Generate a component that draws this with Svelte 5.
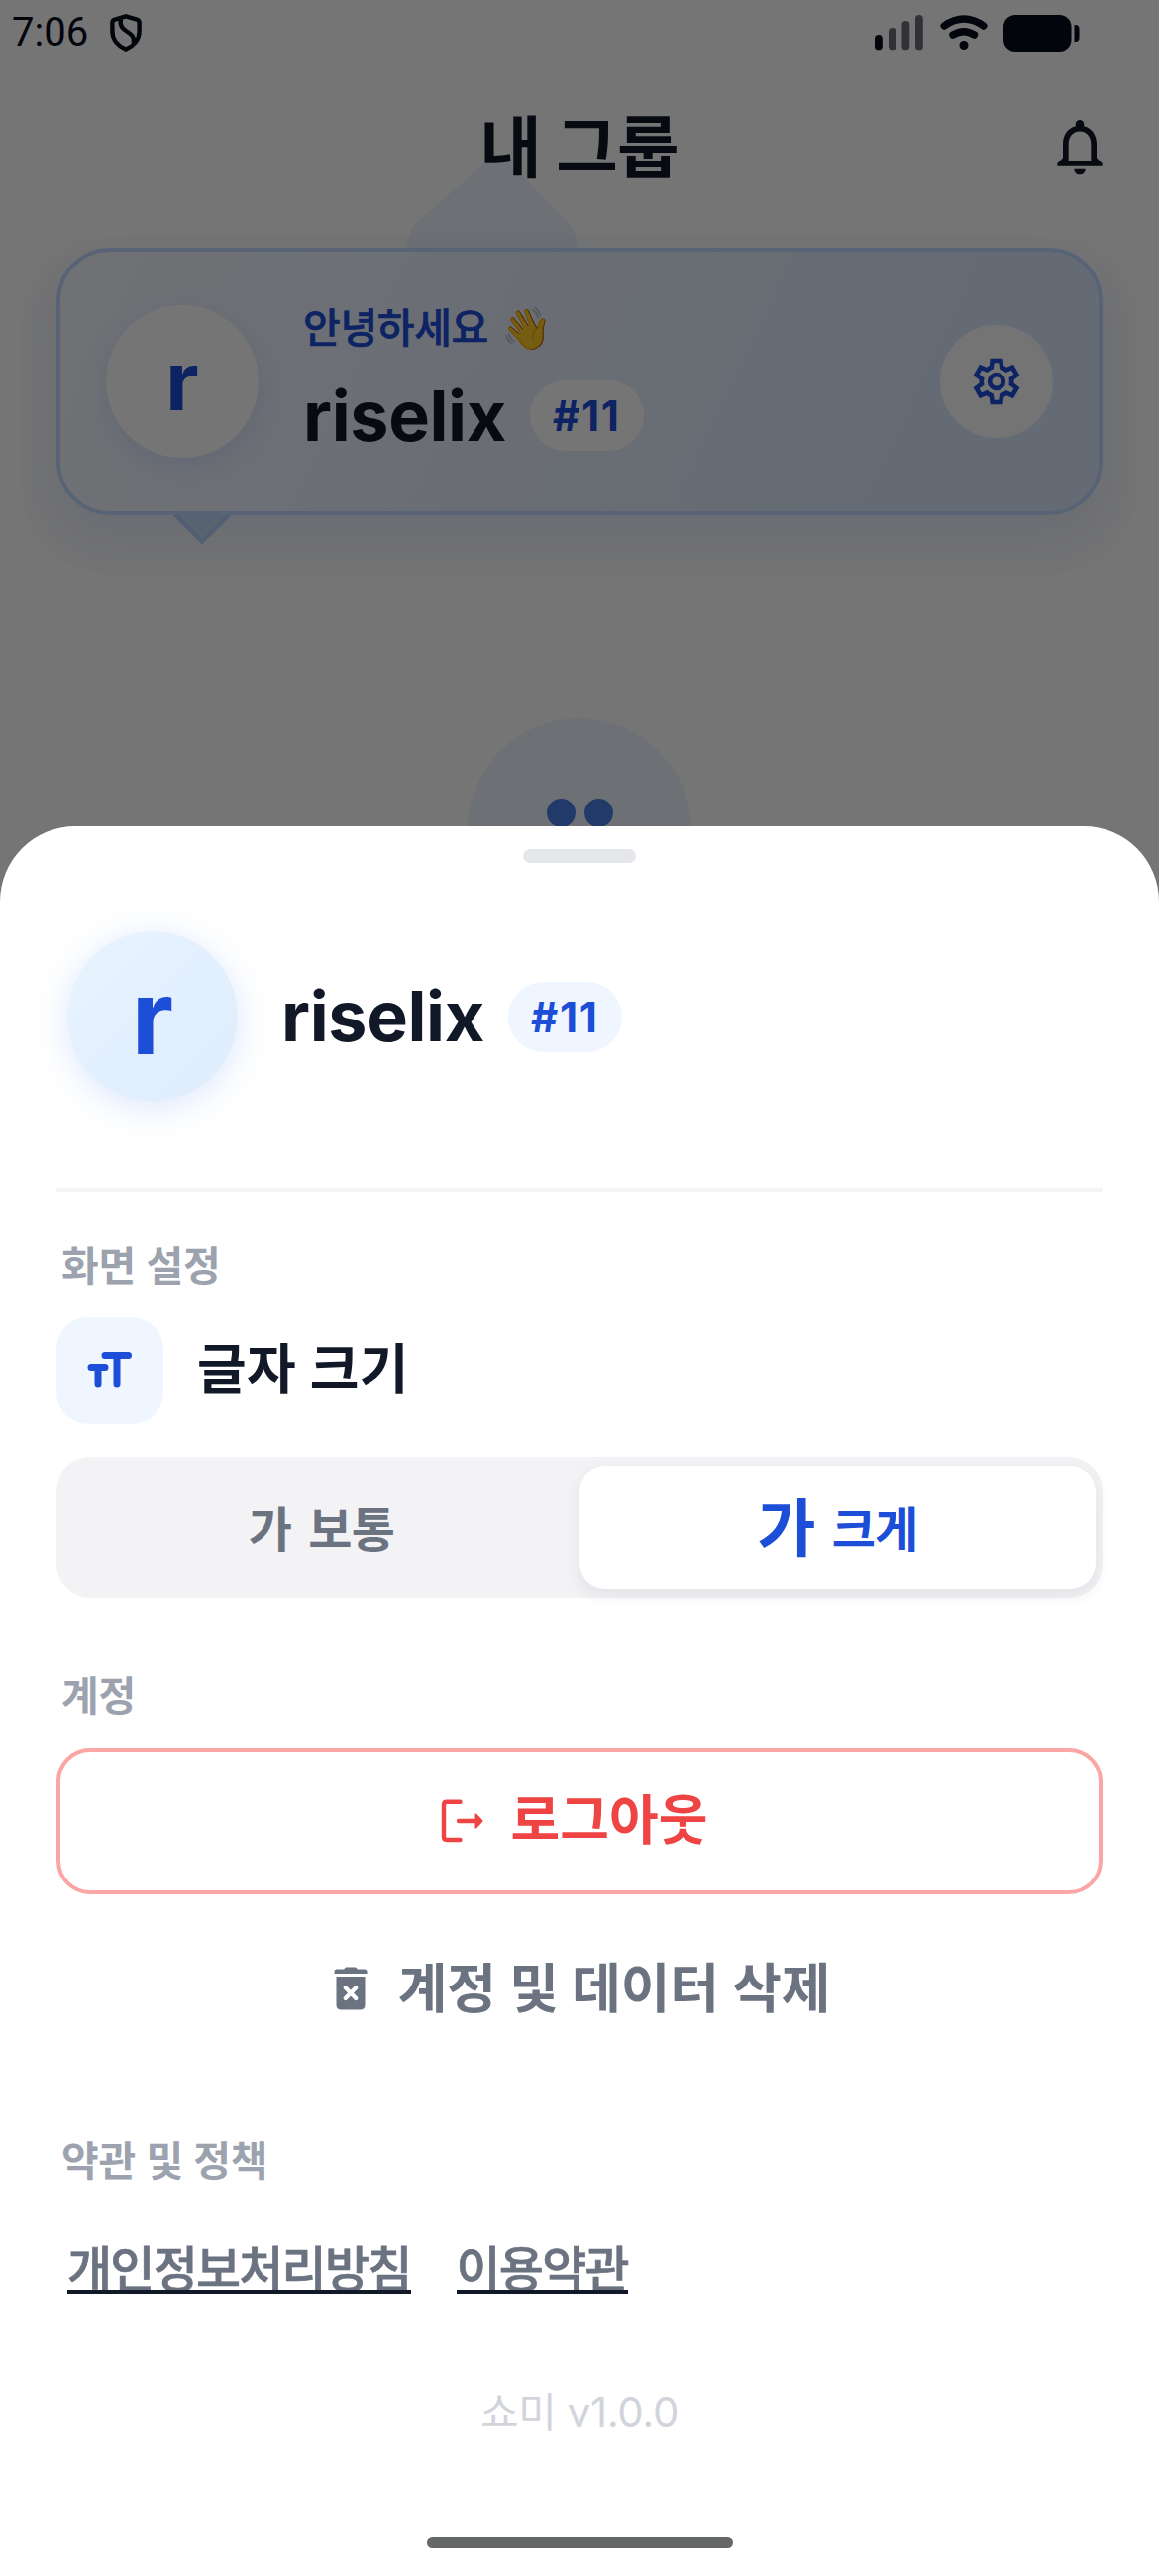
<script>
  let userName = 'riselix';
  let userTag = '#11';
  let fontSize = 'large';

  const signalBars = [
    { x: 0, y: 20, on: true },
    { x: 14, y: 13, on: false },
    { x: 27.5, y: 6, on: false },
    { x: 41, y: 0, on: false }
  ];

  const policies = ['개인정보처리방침', '이용약관'];
</script>

<div class="screen">
  <div class="page">
    <div class="status-bar">
      <span class="clock">7:06</span>
      <svg class="shield" width="32" height="38" viewBox="0 0 32 38" fill="none" stroke="currentColor" stroke-width="4.4" stroke-linejoin="round">
        <path d="M16 2.3 L27 5.600 Q29.600 6.500 29.600 9 V17.5 C29.6 26 23.5 32.5 16 35.6 C8.500 32.5 2.400 26 2.400 17.500 V9 Q2.400 6.500 5 5.600 Z" />
        <path d="M11 5 C7.500 19 27 17 23.500 29" />
      </svg>
      <div class="status-right">
        <svg width="49" height="36" viewBox="0 0 49 36">
          {#each signalBars as bar}
            <rect x={bar.x} y={bar.y} width="7.8" height={35.3 - bar.y} rx="3.9" fill="currentColor" opacity={bar.on ? 1 : 0.6} />
          {/each}
        </svg>
        <svg class="wifi" width="48" height="36" viewBox="0 0 48 36" fill="none" stroke="currentColor" stroke-width="7.400" stroke-linecap="round">
          <path d="M4.200 11 Q24 -2.800 43.800 11" />
          <path d="M13 20 Q24 13.400 34.500 20" />
          <circle cx="24" cy="30.500" r="4.500" fill="currentColor" stroke="none" />
        </svg>
        <svg class="battery" width="77" height="37" viewBox="0 0 77 37" fill="currentColor">
          <rect width="68.500" height="37" rx="12" />
          <path d="M71.500 10 h1 a4 4 0 0 1 4 4 v9 a4 4 0 0 1 -4 4 h-1 z" />
        </svg>
      </div>
    </div>

    <header class="app-header">
      <h1>내 그룹</h1>
      <svg class="bell" width="68" height="68" viewBox="0 0 24 24" fill="currentColor">
        <path d="M12 22c1.100 0 2-.9 2-2h-4c0 1.100.9 2 2 2zm6-6v-5c0-3.070-1.630-5.640-4.500-6.320V4c0-.83-.67-1.500-1.500-1.500s-1.500.67-1.500 1.500v.68C7.640 5.360 6 7.920 6 11v5l-2 2v1h16v-1l-2-2zm-2 1H8v-6c0-2.480 1.510-4.500 4-4.500s4 2.020 4 4.500v6z" />
      </svg>
    </header>

    <section class="greeting-card">
      <svg class="glow" width="172" height="86" viewBox="0 0 172 86">
        <path d="M78 0 H104 L163 60 Q172 70 172 86 H0 Q0 70 9 60 Z" />
      </svg>
      <div class="tail"></div>
      <div class="card-body">
        <div class="avatar">r</div>
        <div class="who">
          <div class="hello">안녕하세요 <span class="wave">👋</span></div>
          <div class="name-row">
            <span class="name">{userName}</span>
            <span class="tag">{userTag}</span>
          </div>
        </div>
        <button class="settings" aria-label="설정">
          <svg width="56" height="56" viewBox="0 -960 960 960" fill="currentColor">
            <path fill-rule="evenodd" d="m370-80-16-128q-13-5-24.500-12T307-235l-119 50L78-375l103-78q-1-7-1-13.500v-27q0-6.500 1-13.500L78-585l110-190 119 50q11-8 23-15t24-12l16-128h220l16 128q13 5 24.500 12t22.500 15l119-50 110 190-103 78q1 7 1 13.500v27q0 6.500-2 13.500l103 78-110 190-118-50q-11 8-23 15t-24 12L590-80H370Zm70-80h79l14-106q31-8 57.500-23.500T639-327l99 41 39-68-86-65q5-14 7-29.500t2-31.500q0-16-2-31.500t-7-29.500l86-65-39-68-99 42q-22-23-48.500-38.500T533-694l-13-106h-79l-14 106q-31 8-57.500 23.500T321-633l-99-41-39 68 86 64q-5 15-7 30t-2 32q0 16 2 31t7 30l-86 65 39 68 99-42q22 23 48.500 38.500T427-266l13 106Z" />
            <circle cx="480" cy="-480" r="118" fill="none" stroke="currentColor" stroke-width="80" />
          </svg>
        </button>
      </div>
    </section>

    <div class="empty-art">
      <i></i>
      <i></i>
    </div>
  </div>

  <div class="backdrop"></div>

  <div class="sheet">
    <div class="handle"></div>

    <div class="profile">
      <div class="avatar big">r</div>
      <span class="name">{userName}</span>
      <span class="tag">{userTag}</span>
    </div>

    <div class="divider"></div>

    <h2 class="label first">화면 설정</h2>
    <div class="setting-row">
      <div class="tile">
        <svg width="46" height="38" viewBox="0 0 46 38" fill="none" stroke="currentColor" stroke-width="7" stroke-linecap="round">
          <path d="M18 4.500 H41.500 M30 4.500 V33" />
          <path d="M4 16.500 H18 M11 16.500 V33" />
        </svg>
      </div>
      <span class="setting-title">글자 크기</span>
    </div>
    <div class="segmented">
      <button class="segment" class:active={fontSize === 'normal'} on:click={() => (fontSize = 'normal')}>
        <span>가</span>
        <span>보통</span>
      </button>
      <button class="segment large" class:active={fontSize === 'large'} on:click={() => (fontSize = 'large')}>
        <span class="sample">가</span>
        <span>크게</span>
      </button>
    </div>

    <h2 class="label account">계정</h2>
    <button class="logout">
      <svg width="44" height="44" viewBox="0 0 44 44" fill="none" stroke="currentColor" stroke-width="4.400" stroke-linecap="round" stroke-linejoin="round">
        <path d="M19.500 2.700 H6 Q3 2.700 3 5.700 V38 Q3 41 6 41 H19.500" />
        <path d="M18 22 H34" />
        <path d="M35.500 15.500 L41.500 22 L35.500 28.500 Z" fill="currentColor" stroke-width="2" />
      </svg>
      <span>로그아웃</span>
    </button>
    <button class="delete">
      <svg width="34" height="44" viewBox="0 0 34 44" fill="currentColor">
        <path d="M10 2.500 L12 .5 H22 L24 2.500 H31 Q33.500 2.500 33.500 5 V7 H.5 V5 Q.5 2.500 3 2.500 Z" />
        <path d="M2.500 10 H31.500 V38.500 Q31.500 43.500 26.500 43.500 H7.500 Q2.500 43.500 2.500 38.500 Z" />
        <path d="M11.700 21.300 L22.300 31.900 M22.300 21.300 L11.700 31.900" stroke="#fff" stroke-width="4.200" stroke-linecap="round" />
      </svg>
      <span>계정 및 데이터 삭제</span>
    </button>

    <h2 class="label policy">약관 및 정책</h2>
    <nav class="links">
      {#each policies as policy}
        <span class="link">{policy}</span>
      {/each}
    </nav>

    <div class="version">쇼미 v1.0.0</div>
    <div class="home-bar"></div>
  </div>
</div>

<style>
  :global(body) {
    margin: 0;
    background: #fff;
  }

  .screen {
    position: relative;
    width: 1170px;
    height: 2600px;
    overflow: hidden;
    display: flex;
    flex-direction: column;
    justify-content: flex-end;
    font-family: Inter, 'Noto Sans CJK KR', sans-serif;
    color: #111827;
  }

  button {
    font: inherit;
    color: inherit;
    border: none;
    background: none;
    padding: 0;
    margin: 0;
  }

  h1,
  h2 {
    margin: 0;
  }

  svg {
    display: block;
    flex: none;
  }

  /* page under the sheet */
  .page {
    position: absolute;
    inset: 0;
    z-index: 0;
    background: #fff;
  }

  .backdrop {
    position: absolute;
    inset: 0;
    background: rgba(0, 0, 0, 0.54);
  }

  .status-bar {
    height: 66px;
    box-sizing: border-box;
    padding: 0 80px 0 12px;
    display: flex;
    align-items: center;
    color: #060b18;
  }

  .clock {
    font-family: Roboto, sans-serif;
    font-size: 40px;
    line-height: 66px;
  }

  .shield {
    margin-left: 22px;
  }

  .status-right {
    margin-left: auto;
    display: flex;
    align-items: center;
  }

  .wifi {
    margin-left: 17px;
  }

  .battery {
    margin-left: 16px;
  }

  .app-header {
    position: relative;
    z-index: 1;
    height: 164px;
    box-sizing: border-box;
    padding: 0 46px 0 113px;
    display: flex;
    align-items: center;
  }

  h1 {
    flex: 1;
    text-align: center;
    font-size: 68px;
    line-height: 100px;
    padding-top: 2px;
    font-weight: 700;
    letter-spacing: -0.012em;
  }

  .greeting-card {
    position: relative;
    margin: 20px 57px 0;
    height: 270px;
  }

  .glow {
    position: absolute;
    left: 354px;
    top: -85px;
    fill: #eef3ff;
  }

  .tail {
    position: absolute;
    left: 124px;
    top: 244px;
    width: 38px;
    height: 38px;
    border: 4px solid #bfdbfe;
    background: #d3e6fb;
    transform: rotate(45deg);
  }

  .card-body {
    position: relative;
    height: 100%;
    box-sizing: border-box;
    border: 4px solid #bfdbfe;
    border-radius: 54px;
    padding: 0 46px;
    display: flex;
    align-items: center;
    background: linear-gradient(115deg, #f3f7fd 0%, #ebf1fe 30%, #e3edfc 60%, #dbeafe 80%);
    box-shadow:
      0 22px 48px rgba(37, 99, 235, 0.11),
      0 24px 6px 36px rgba(17, 24, 39, 0.015);
  }

  .avatar {
    flex: none;
    width: 154px;
    height: 154px;
    border-radius: 50%;
    background: #fff;
    color: #1d4ed8;
    font-size: 82px;
    font-weight: 700;
    line-height: 154px;
    text-align: center;
    box-shadow: 0 8px 28px rgba(37, 99, 235, 0.13);
  }

  .who {
    flex: 1;
    margin-left: 45px;
  }

  .hello {
    height: 60px;
    line-height: 60px;
    margin-top: -10px;
    font-size: 41px;
    font-weight: 500;
    letter-spacing: -0.008em;
    color: #1d4ed8;
    -webkit-text-stroke: 0.7px #1d4ed8;
    white-space: nowrap;
  }

  .wave {
    font-size: 41px;
    line-height: 1;
    letter-spacing: 0;
    margin-left: 2px;
  }

  .name-row {
    display: flex;
    align-items: center;
    height: 80px;
    margin-top: 19px;
  }

  .name {
    font-size: 70px;
    font-weight: 700;
    line-height: 80px;
    letter-spacing: -0.005em;
  }

  .tag {
    margin-left: 24px;
    height: 71px;
    line-height: 71px;
    padding: 0 23px;
    border-radius: 36px;
    background: #fff;
    color: #1d4ed8;
    font-size: 42px;
    font-weight: 700;
    letter-spacing: 0.04em;
  }

  .settings {
    width: 114px;
    height: 114px;
    border-radius: 50%;
    background: rgba(255, 255, 255, 0.9);
    color: #1d4ed8;
    display: flex;
    align-items: center;
    justify-content: center;
  }

  .empty-art {
    width: 226px;
    height: 226px;
    margin: 205px auto 0;
    border-radius: 50%;
    background: #eef3fc;
    display: flex;
    justify-content: center;
    gap: 9px;
  }

  .empty-art i {
    width: 29px;
    height: 29px;
    margin-top: 81px;
    border-radius: 50%;
    background: #4b7fe6;
  }

  /* bottom sheet */
  .sheet {
    position: relative;
    height: 1766px;
    box-sizing: border-box;
    padding: 23px 57px 0;
    border-radius: 76px 76px 0 0;
    background: #fff;
  }

  .handle {
    width: 114px;
    height: 14px;
    margin: 0 auto;
    border-radius: 7px;
    background: #e5e7eb;
  }

  .profile {
    display: flex;
    align-items: center;
    margin-top: 69px;
    padding-left: 11px;
  }

  .big {
    width: 172px;
    height: 172px;
    line-height: 172px;
    font-size: 104px;
    margin-right: 44px;
    background: linear-gradient(135deg, #eaf4ff, #e2effe 50%, #dfedfd);
    box-shadow: 0 6px 34px rgba(59, 130, 246, 0.18);
  }

  .profile .tag {
    background: #eff6ff;
  }

  .divider {
    height: 4px;
    margin-top: 87px;
    background: #f3f4f6;
  }

  .label {
    height: 60px;
    line-height: 60px;
    padding-left: 5px;
    font-size: 41px;
    font-weight: 600;
    letter-spacing: -0.003em;
    color: #9ca3af;
  }

  .first {
    margin-top: 45px;
  }

  .account {
    margin-top: 69px;
  }

  .policy {
    margin-top: 70px;
  }

  .setting-row {
    display: flex;
    align-items: center;
    margin-top: 21px;
  }

  .tile {
    width: 108px;
    height: 108px;
    border-radius: 32px;
    background: #eff6ff;
    color: #1d4ed8;
    display: flex;
    align-items: center;
    justify-content: center;
  }

  .setting-title {
    margin-left: 34px;
    font-size: 54px;
    line-height: 80px;
    font-weight: 600;
    letter-spacing: 0.005em;
  }

  .segmented {
    display: flex;
    height: 142px;
    box-sizing: border-box;
    margin-top: 34px;
    padding: 9px 7px;
    border-radius: 34px;
    background: #f3f3f6;
  }

  .segment {
    flex: 1;
    border-radius: 26px;
    display: flex;
    align-items: center;
    justify-content: center;
    gap: 17px;
    padding-top: 3px;
    font-size: 48px;
    line-height: 70px;
    font-weight: 600;
    letter-spacing: -0.015em;
    color: #6b7280;
  }

  .segment.active {
    background: #fff;
    color: #1d4ed8;
    font-weight: 700;
    box-shadow: 0 6px 18px rgba(17, 24, 39, 0.08);
  }

  .sample {
    font-size: 64px;
    margin-top: -2px;
  }

  .logout {
    width: 100%;
    height: 148px;
    box-sizing: border-box;
    margin-top: 22px;
    padding-right: 10px;
    border: 4px solid #fca5a5;
    border-radius: 34px;
    display: flex;
    align-items: center;
    justify-content: center;
    gap: 26px;
    font-size: 54px;
    font-weight: 700;
    letter-spacing: 0.002em;
    color: #ef4444;
  }

  .logout span {
    padding-bottom: 10px;
  }

  .delete {
    width: 100%;
    height: 148px;
    margin-top: 21px;
    padding-left: 5px;
    display: flex;
    align-items: center;
    justify-content: center;
    gap: 31px;
    font-size: 54px;
    font-weight: 600;
    letter-spacing: -0.003em;
    color: #6b7280;
  }

  .delete span {
    padding-bottom: 7px;
  }

  .links {
    display: flex;
    gap: 46px;
    margin-top: 41px;
    padding-left: 11px;
  }

  .link {
    position: relative;
    height: 50px;
    line-height: 60px;
    padding-top: 9px;
    font-size: 49px;
    font-weight: 500;
    letter-spacing: -0.036em;
    color: #6b7280;
    -webkit-text-stroke: 0.7px #6b7280;
  }

  .link::after {
    content: '';
    position: absolute;
    left: 0;
    right: 0;
    bottom: -4px;
    height: 4px;
    background: #111827;
  }

  .version {
    margin-top: 94px;
    height: 60px;
    line-height: 60px;
    text-align: center;
    font-size: 42px;
    letter-spacing: -0.01em;
    color: #d1d5db;
  }

  .home-bar {
    width: 309px;
    height: 11px;
    margin: 96px auto 0;
    border-radius: 6px;
    background: #666868;
  }
</style>
